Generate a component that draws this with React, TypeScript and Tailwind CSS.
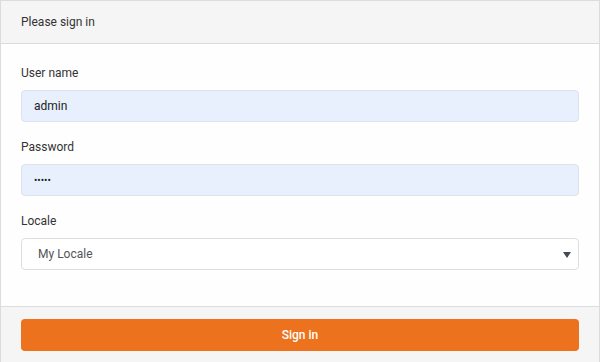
import React from "react";

export default function App() {
  return (
    <div className="w-[602px] h-[362px] overflow-hidden bg-white font-['Roboto',sans-serif] text-[12px] text-[#333]">
      <div className="w-[600px] border border-[#dcdcdc] flex flex-col">
        <div className="h-[43px] bg-[#f5f5f5] border-b border-[#dcdcdc] px-5 flex items-center">
          Please sign in
        </div>
        <div className="px-5 pt-5 pb-9 flex flex-col bg-[#fefefe]">
          <label className="leading-[18px]">User name</label>
          <div className="mt-2 h-[32px] rounded-[4px] border border-[#dde3ec] bg-[#e8f0fe] px-3 flex items-center text-[#222]">
            admin
          </div>
          <label className="mt-4 leading-[18px]">Password</label>
          <div className="mt-2 h-[32px] rounded-[4px] border border-[#dde3ec] bg-[#e8f0fe] px-3 flex items-center text-[#222] text-[10px]">
            •••••
          </div>
          <label className="mt-4 leading-[18px]">Locale</label>
          <div className="mt-2 h-[32px] rounded-[4px] border border-[#dedede] bg-white pl-4 pr-[7px] flex items-center justify-between text-[#555]">
            <span>My Locale</span>
            <svg width="8" height="6" viewBox="0 0 8 6" className="mt-[1px]">
              <path d="M0 0 L8 0 L4 6 Z" fill="#444a52" />
            </svg>
          </div>
        </div>
        <div className="bg-[#f5f5f5] border-t border-[#dcdcdc] px-5 pt-3 pb-3">
          <button className="w-full h-[32px] rounded-[4px] bg-[#ed721d] text-white text-[12px] font-medium">
            Sign in
          </button>
        </div>
      </div>
    </div>
  );
}
